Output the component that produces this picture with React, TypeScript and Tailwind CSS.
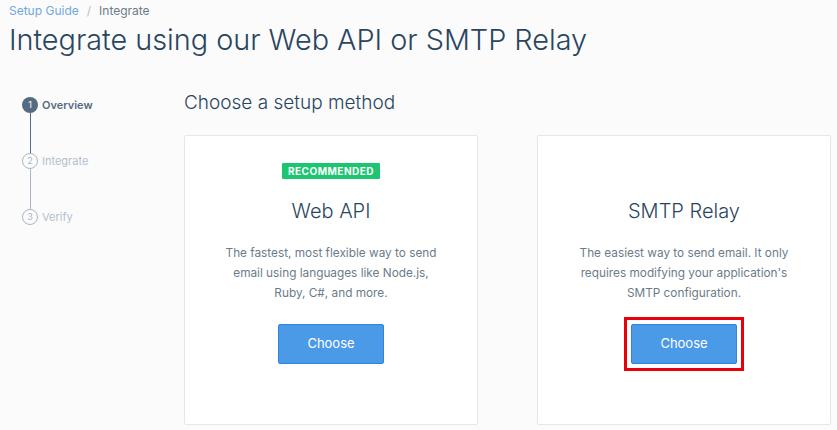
import { ReactNode } from "react";

interface Method {
  name: string;
  blurb: ReactNode;
  recommended?: boolean;
  highlighted?: boolean;
}

const methods: Method[] = [
  {
    name: "Web API",
    blurb: (
      <>
        The fastest, most flexible way to send
        <br />
        email using languages like Node.js,
        <br />
        Ruby, C#, and more.
      </>
    ),
    recommended: true,
  },
  {
    name: "SMTP Relay",
    blurb: (
      <>
        The easiest way to send email. It only
        <br />
        requires modifying your application's
        <br />
        SMTP configuration.
      </>
    ),
    highlighted: true,
  },
];

const steps = ["Overview", "Integrate", "Verify"];

const StepList = () => (
  <ol className="flex flex-col pl-[13px] pt-[17px]">
    {steps.map((label, i) => {
      const active = i === 0;
      return (
        <li key={label} className="flex flex-col">
          <div className="flex items-center h-[16px]">
            <span
              className={
                active
                  ? "w-[16px] h-[16px] rounded-full bg-[#546b81] text-white text-[9px] flex items-center justify-center"
                  : "w-[16px] h-[16px] rounded-full border border-[#aab6c2] text-[#aab6c2] text-[9px] flex items-center justify-center"
              }
            >
              {i + 1}
            </span>
            <span
              className={
                active
                  ? "ml-[4px] text-[11px] text-[#546b81] font-semibold"
                  : "ml-[4px] text-[11px] text-[#b4c0cb]"
              }
            >
              {label}
            </span>
          </div>
          {i < steps.length - 1 && (
            <div
              className={
                active
                  ? "ml-[7.5px] w-px h-[40px] bg-[#546b81]"
                  : "ml-[7.5px] w-px h-[40px] bg-[#aab6c2]"
              }
            />
          )}
        </li>
      );
    })}
  </ol>
);

const MethodCard = ({ method }: { method: Method }) => (
  <div className="w-[294px] h-[290px] bg-white border border-[#e7e7e7] rounded-[2px] flex flex-col items-center pt-[27px]">
    <div className="h-[16px]">
      {method.recommended && (
        <span className="block h-[16px] px-[6px] bg-[#1cc670] rounded-[1px] text-white text-[10px] font-bold tracking-[0.05em] leading-[16px]">
          RECOMMENDED
        </span>
      )}
    </div>
    <h3 className="mt-[18px] text-[20px] font-light text-[#294661] leading-[28px]">
      {method.name}
    </h3>
    <p className="mt-[18px] text-[11.8px] leading-[20px] text-[#6b7b8b] text-center">
      {method.blurb}
    </p>
    <div className="mt-[21px] relative">
      <button className="w-[106px] h-[40px] bg-[#4a9ae8] border border-[#2b86e0] rounded-[2px] text-white text-[13px]">
        Choose
      </button>
      {method.highlighted && (
        <div className="absolute -inset-[7px] border-[3px] border-[#e8000b] pointer-events-none" />
      )}
    </div>
  </div>
);

export default function App() {
  return (
    <div
      className="w-[837px] h-[430px] bg-[#fbfbfb] overflow-hidden pl-[9px]"
      style={{ fontFamily: "Inter, 'Liberation Sans', sans-serif" }}
    >
      <nav className="pt-[3px] text-[12px] leading-[16px]">
        <span className="text-[#73a6e0]">Setup Guide</span>
        <span className="mx-[8px] text-[#b7c1cb]">/</span>
        <span className="text-[#6b7b8b]">Integrate</span>
      </nav>
      <h1 className="mt-[3px] text-[28.8px] font-light leading-[36px] text-[#294661]">
        Integrate using our Web API or SMTP Relay
      </h1>
      <div className="flex mt-[22px]">
        <aside className="w-[175px] shrink-0">
          <StepList />
        </aside>
        <main className="pt-[9px]">
          <h2 className="text-[19px] font-light leading-[28px] text-[#294661]">
            Choose a setup method
          </h2>
          <div className="mt-[18px] flex gap-[59px]">
            {methods.map((m) => (
              <MethodCard key={m.name} method={m} />
            ))}
          </div>
        </main>
      </div>
    </div>
  );
}
